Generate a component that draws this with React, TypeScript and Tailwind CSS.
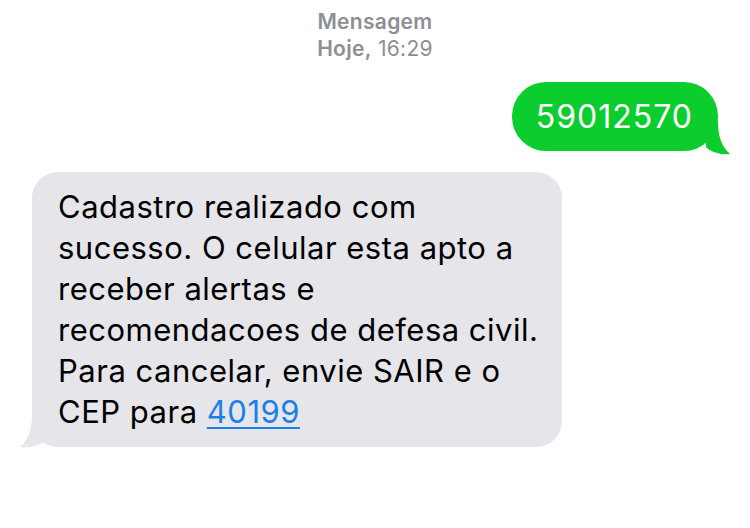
import React from "react";

export default function App() {
  const lines = [
    "Cadastro realizado com",
    "sucesso. O celular esta apto a",
    "receber alertas e",
    "recomendacoes de defesa civil.",
    "Para cancelar, envie SAIR e o",
  ];
  return (
    <div
      className="w-[750px] h-[528px] bg-white flex flex-col overflow-hidden"
      style={{ fontFamily: "Inter, 'Noto Sans', sans-serif" }}
    >
      <div className="flex flex-col items-center pt-[8px] text-[21px] leading-[27px] text-[#8e8e93] tracking-[0.3px]">
        <div className="font-semibold">Mensagem</div>
        <div>
          <span className="font-semibold">Hoje,</span> 16:29
        </div>
      </div>

      <div className="flex justify-end pr-[32px] mt-[20px]">
        <div className="relative">
          <div className="bg-[#0ccd2e] text-white rounded-[34px] h-[69px] pl-[24px] pr-[25px] flex items-center text-[32px] tracking-[1px]">
            59012570
          </div>
          <svg
            className="absolute right-[-12px] bottom-[-4px]"
            width="24"
            height="34"
            viewBox="0 0 24 34"
          >
            <path
              d="M0 0 L12 0 C12 14 15 25 24 33 C16 34 8 32 2 28 C1 27 0 26 0 26 Z"
              fill="#0ccd2e"
            />
          </svg>
        </div>
      </div>

      <div className="flex pl-[32px] mt-[21px]">
        <div className="relative">
          <div className="w-[530px] bg-[#e5e5ea] rounded-[26px] pl-[26px] pr-[10px] pt-[14px] pb-[15px] text-[31px] leading-[41px] text-black tracking-[0.5px]">
            {lines.map((l) => (
              <div key={l} className="whitespace-nowrap">
                {l}
              </div>
            ))}
            <div className="whitespace-nowrap">
              CEP para{" "}
              <span className="text-[#1a80e6] underline decoration-[2px] underline-offset-[4px]">
                40199
              </span>
            </div>
          </div>
          <svg
            className="absolute left-[-12px] bottom-[-1px]"
            width="30"
            height="34"
            viewBox="0 0 30 34"
          >
            <path
              d="M30 0 L12 0 C12 14 9 26 0 33 C8 34 18 32 24 28 C26 27 30 26 30 26 Z"
              fill="#e5e5ea"
            />
          </svg>
        </div>
      </div>
    </div>
  );
}
